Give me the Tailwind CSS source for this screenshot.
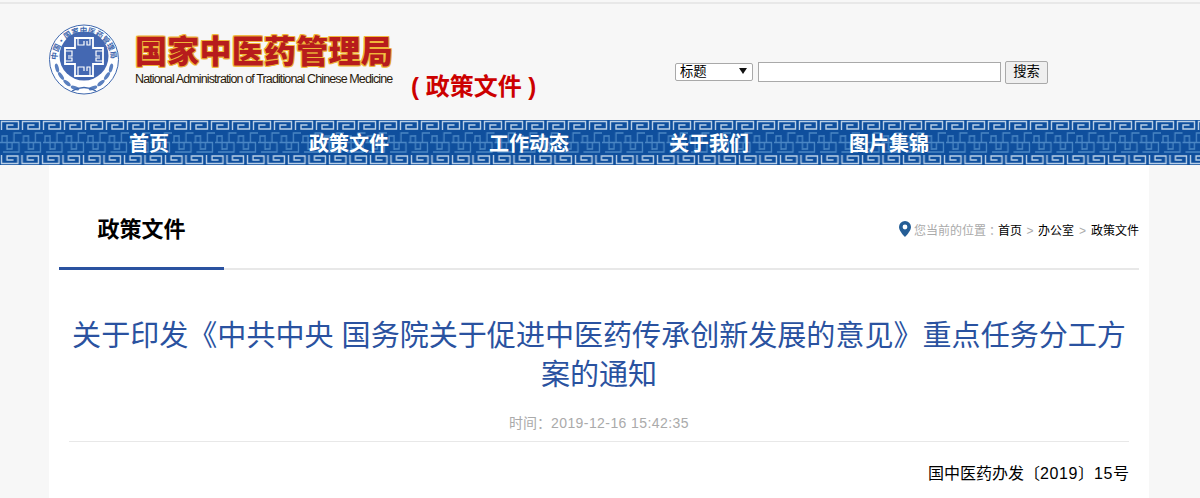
<!DOCTYPE html>
<html lang="zh-CN">
<head>
<meta charset="UTF-8" />
<title>关于印发《中共中央 国务院关于促进中医药传承创新发展的意见》重点任务分工方案的通知</title>
<script src="https://cdn.jsdelivr.net/npm/@tailwindcss/browser@4"></script>
</head>
<body class="h-[498px] overflow-hidden bg-[#f7f7f7] font-['Liberation_Sans','Noto_Sans_CJK_SC',sans-serif]">

  <!-- header -->
  <div class="h-[120px] pt-[2px]">
    <div class="h-[2px] bg-[#e8e8e8]"></div>
    <div class="flex pl-[49px] pt-[20px]">
      <svg width="70" height="72" viewBox="49 24 70 72" class="shrink-0">
        <defs><path id="ringText" d="M57 60 A27 27 0 1 1 111 60" /></defs>
        <circle cx="84" cy="59.500" r="34.500" fill="#fff" stroke="#3f68ae" stroke-width="1" />
        <circle cx="84" cy="56" r="24.500" fill="#4468b2" />
        <text font-size="7.600" font-weight="700" fill="#3f68ae" font-family="'Noto Sans CJK SC',sans-serif"><textPath href="#ringText">中国•国家中医药管理局</textPath></text>
        <path d="M75 38H93V48H103V64H93V76H75V64H65V48H75Z" fill="#4468b2" stroke="#fff" stroke-width="1.800" />
        <path d="M78 38V45H84V41M90 38V45H87V41M78 76V67H84V71M90 76V67H87V71M65 51H72V56H68M65 61H72V58H68M103 51H96V56H100M103 61H96V58H100" fill="none" stroke="#fff" stroke-width="1.200" />
        <g fill="#5b80bf">
          <ellipse cx="57" cy="68" rx="1.800" ry="4.500" transform="rotate(-15 57 68)" />
          <ellipse cx="61" cy="76" rx="1.800" ry="4.500" transform="rotate(-35 61 76)" />
          <ellipse cx="67" cy="83" rx="1.800" ry="4.500" transform="rotate(-50 67 83)" />
          <ellipse cx="75" cy="88" rx="1.800" ry="4.500" transform="rotate(-70 75 88)" />
          <ellipse cx="111" cy="68" rx="1.800" ry="4.500" transform="rotate(15 111 68)" />
          <ellipse cx="107" cy="76" rx="1.800" ry="4.500" transform="rotate(35 107 76)" />
          <ellipse cx="101" cy="83" rx="1.800" ry="4.500" transform="rotate(50 101 83)" />
          <ellipse cx="93" cy="88" rx="1.800" ry="4.500" transform="rotate(70 93 88)" />
        </g>
        <path d="M72 91Q84 84 96 91" fill="none" stroke="#3f68ae" stroke-width="1.400" />
      </svg>
      <div class="ml-[16px] w-[257px] shrink-0 pt-[9px]">
        <div class="h-[38px] whitespace-nowrap text-[32px] leading-[38px] tracking-[0.25px] font-black text-[#b71c1c] [text-shadow:1px_0_0_#f0b63a,-1px_0_0_#f0b63a,0_1px_0_#f0b63a,0_-1px_0_#f0b63a,1px_1px_0_#f0b63a,-1px_-1px_0_#f0b63a,1px_-1px_0_#f0b63a,-1px_1px_0_#f0b63a]">国家中医药管理局</div>
        <div class="whitespace-nowrap text-[12.5px] leading-[16px] tracking-[-0.88px] text-[#2a1a0a]">National Administration of Traditional Chinese Medicine</div>
      </div>
      <div class="ml-[19px] mt-[48px] w-[264px] shrink-0 whitespace-nowrap text-[24px] leading-[30px] font-bold text-[#cc0000]">( 政策文件 )</div>
      <form class="mt-[36px] ml-[1px] flex h-[24px] shrink-0 items-center text-[13.33px] text-black">
        <div class="relative ml-[-1px] flex h-[18px] w-[78px] items-center rounded-[2px] border border-[#a9a9a9] bg-white pl-[4px]">
          标题
          <svg width="8" height="6" class="absolute right-[5px] top-[4px]" viewBox="0 0 8 6"><path d="M0 0H8L4 6Z" fill="#111" /></svg>
        </div>
        <div class="ml-[5px] h-[20px] w-[243px] border border-[#a9a9a9] bg-white"></div>
        <div class="ml-[4px] flex h-[23px] w-[43px] items-center justify-center rounded-[2px] border border-[#a9a9a9] bg-[#efefef]">搜索</div>
      </form>
    </div>
  </div>

  <!-- nav -->
  <div class="relative h-[45px] overflow-hidden bg-[#0f4f9d]">
    <svg class="absolute inset-0 h-[45px] w-full" xmlns="http://www.w3.org/2000/svg">
      <defs>
        <pattern id="keyTop" width="21" height="11" patternUnits="userSpaceOnUse">
          <path d="M1.500 10V1.500H18.500V9H7V5H13.500" fill="none" stroke="#b9cfe6" stroke-width="1.400" />
        </pattern>
        <pattern id="keyMid" width="21.500" height="21" patternUnits="userSpaceOnUse">
          <path d="M0 10.500H14V1H21.500M7 3V18M7 4H2V10M7 17H12V10.500M14 10.500H19V20H3" fill="none" stroke="#4a86c4" stroke-width="1.300" />
        </pattern>
        <pattern id="keyBottom" width="20.500" height="11" patternUnits="userSpaceOnUse">
          <path d="M1.500 1V9.500H18V2H7V6H13.500" fill="none" stroke="#b9cfe6" stroke-width="1.400" />
        </pattern>
      </defs>
      <rect width="100%" height="11" fill="url(#keyTop)" />
      <g transform="translate(0 12)"><rect width="100%" height="21" fill="url(#keyMid)" /></g>
      <g transform="translate(0 34)"><rect width="100%" height="11" fill="url(#keyBottom)" /></g>
    </svg>
    <nav class="relative ml-[59px] flex h-full items-center pt-[2px] text-[20px] font-bold text-white">
      <a class="w-[180px] text-center">首页</a>
      <a class="ml-[20px] w-[180px] text-center">政策文件</a>
      <a class="w-[180px] text-center">工作动态</a>
      <a class="w-[180px] text-center">关于我们</a>
      <a class="w-[180px] text-center">图片集锦</a>
    </nav>
  </div>

  <!-- content card -->
  <div class="ml-[49px] h-[333px] w-[1100px] bg-white px-[10px]">
    <div class="flex h-[105px] items-end justify-between border-b-2 border-[#e8e8e8]">
      <div class="mb-[-2px] flex h-[105px] w-[165px] items-center justify-center border-b-[3px] border-[#2a52a0] pt-[27px] text-[22px] font-bold text-black">政策文件</div>
      <div class="mb-[29px] flex items-center text-[12px] leading-[16px] text-[#aaa]">
        <svg width="12" height="16" viewBox="0 0 12 16" class="mr-[3px] mt-[-4px]"><path fill-rule="evenodd" d="M6 0a6 6 0 0 1 6 6c0 3.400-3.600 7.600-6 10C3.600 13.600 0 9.400 0 6a6 6 0 0 1 6-6Zm0 3.600a2.400 2.400 0 1 0 0 4.800a2.400 2.400 0 0 0 0-4.800Z" fill="#255e96" /></svg>
        您当前的位置<span class="font-['Noto_Sans_CJK_TC']">：</span><span class="text-black">首页</span><span class="mx-[4.5px]">&gt;</span><span class="text-black">办公室</span><span class="mx-[5px]">&gt;</span><span class="text-black">政策文件</span>
      </div>
    </div>
    <div class="px-[10px]">
      <h1 class="mt-[47px] text-center text-[29.05px] leading-[39px] font-normal text-[#2a52a0]">关于印发《中共中央 国务院关于促进中医药传承创新发展的意见》重点任务分工方案的通知</h1>
      <div class="mt-[17px] h-[30px] border-b border-[#e8e8e8] text-center text-[14px] leading-[20px] text-[#aaa]">时间<span class="font-['Noto_Sans_CJK_TC']">：</span><span class="tracking-[0.42px]">2019-12-16 15:42:35</span></div>
      <p class="mt-[21px] text-right text-[16px] leading-[22px] text-black">国中医药办发〔<span class="tracking-[0.6px]">2019</span>〕<span class="tracking-[0.6px]">15</span>号</p>
    </div>
  </div>

</body>
</html>
